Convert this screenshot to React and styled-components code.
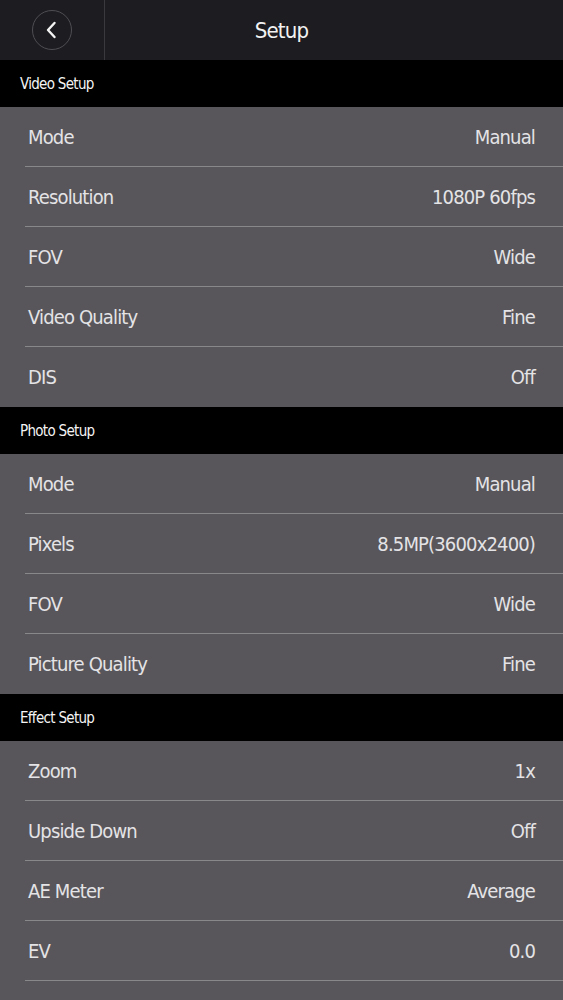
import React from "react";
import styled, { createGlobalStyle } from "styled-components";

const GlobalStyle = createGlobalStyle`
  html, body {
    margin: 0;
    padding: 0;
    background: #58565a;
  }
  * { box-sizing: border-box; }
  body {
    font-family: "Liberation Sans Narrow", "DejaVu Sans Condensed", "Roboto Condensed", "Liberation Sans", sans-serif;
    font-stretch: condensed;
  }
`;

const Page = styled.div`
  width: 563px;
  display: flex;
  flex-direction: column;
`;

const TopBar = styled.header`
  height: 60px;
  background: #1d1c20;
  display: grid;
  grid-template-columns: 105px 1fr 105px;
  align-items: center;
`;

const BackCell = styled.div`
  height: 100%;
  border-right: 1px solid #3a393d;
  display: flex;
  align-items: center;
  justify-content: center;
`;

const BackButton = styled.button`
  width: 40px;
  height: 40px;
  border-radius: 50%;
  border: 1.5px solid #4f4e52;
  background: transparent;
  padding: 0;
  display: flex;
  align-items: center;
  justify-content: center;
  cursor: pointer;
`;

const Title = styled.h1`
  margin: 0;
  text-align: center;
  color: #f2f2f2;
  font-size: 22px;
  letter-spacing: -0.8px;
  font-weight: 400;
`;

const SectionHeader = styled.div`
  height: 47px;
  background: #000;
  display: flex;
  align-items: center;
  padding-left: 20px;
  color: #f4f4f4;
  font-size: 15px;
  letter-spacing: -0.7px;
`;

const Row = styled.div`
  height: 60px;
  display: flex;
  align-items: center;
  justify-content: space-between;
  padding: 0 28px;
  background: #58565a;
  color: #e4e3e6;
  font-size: 20px;
  letter-spacing: -0.85px;
  position: relative;
  &::after {
    content: "";
    display: ${(p) => (p.$last ? "none" : "block")};
    position: absolute;
    left: 25px;
    right: 0;
    bottom: 0;
    height: 1px;
    background: #88878a;
  }
`;

const Label = styled.span``;
const Value = styled.span``;

const sections = [
  {
    title: "Video Setup",
    rows: [
      ["Mode", "Manual"],
      ["Resolution", "1080P 60fps"],
      ["FOV", "Wide"],
      ["Video Quality", "Fine"],
      ["DIS", "Off"],
    ],
  },
  {
    title: "Photo Setup",
    rows: [
      ["Mode", "Manual"],
      ["Pixels", "8.5MP(3600x2400)"],
      ["FOV", "Wide"],
      ["Picture Quality", "Fine"],
    ],
  },
  {
    title: "Effect Setup",
    rows: [
      ["Zoom", "1x"],
      ["Upside Down", "Off"],
      ["AE Meter", "Average"],
      ["EV", "0.0"],
      ["Time Stamp", "Off"],
    ],
  },
];

export default function App() {
  return (
    <>
      <GlobalStyle />
      <Page>
        <TopBar>
          <BackCell>
            <BackButton aria-label="Back">
              <svg width="18" height="20" viewBox="0 0 18 20">
                <path d="M11.5 3 L5 10 L11.5 17" fill="none" stroke="#f4f4f4" strokeWidth="2.4" strokeLinecap="round" strokeLinejoin="round" />
              </svg>
            </BackButton>
          </BackCell>
          <Title>Setup</Title>
          <div />
        </TopBar>
        {sections.map((s) => (
          <React.Fragment key={s.title}>
            <SectionHeader>{s.title}</SectionHeader>
            {s.rows.map(([l, v], i) => (
              <Row key={l + i} $last={i === s.rows.length - 1 && s.title !== "Effect Setup"}>
                <Label>{l}</Label>
                <Value>{v}</Value>
              </Row>
            ))}
          </React.Fragment>
        ))}
      </Page>
    </>
  );
}
